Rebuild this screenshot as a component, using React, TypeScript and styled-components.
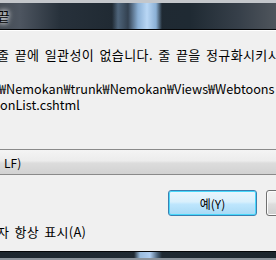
import styled, { createGlobalStyle } from 'styled-components'

const GlobalStyle = createGlobalStyle`
  html, body {
    margin: 0;
    padding: 0;
    width: 276px;
    height: 260px;
    overflow: hidden;
    background: #f0f0f0;
  }
`

const Frame = styled.div`
  width: 276px;
  height: 260px;
  overflow: hidden;

  display: flex;
  flex-direction: column;

  background: #f0f0f0;
  font-family: 'Noto Sans CJK KR', 'Noto Sans', sans-serif;
  font-size: 12px;
  color: #000;
`

const TitleBar = styled.div`
  height: 26px;
  flex-shrink: 0;

  display: flex;
  align-items: center;

  border-top: 3px solid #c4c7cb;
  border-bottom: 1px solid #050608;
  box-shadow: 0 1px 0 #ffffff;

  background:
    linear-gradient(
      90deg,
      transparent 0px,
      transparent 112px,
      rgba(110, 140, 170, 0.6) 118px,
      rgba(80, 100, 125, 0.4) 128px,
      rgba(150, 190, 230, 0.9) 138px,
      rgba(185, 215, 245, 1) 147px,
      rgba(150, 190, 230, 0.9) 156px,
      transparent 162px
    ),
    linear-gradient(
      90deg,
      #454c55 0px,
      #4d5560 20px,
      #27313b 60px,
      #1f2932 120px,
      #1f2a33 190px,
      #37404a 240px,
      #4f555c 276px
    );
`

const Title = styled.span`
  margin-left: -17px;
  padding-bottom: 2px;
  font-size: 13px;

  color: #000;
  text-shadow: 0 0 6px #fff, 0 0 4px #fff;
`

const Message = styled.div`
  display: flex;
  flex-direction: column;

  margin-top: 17px;
  line-height: 16px;
  white-space: nowrap;
`

const Line = styled.div<{ $shift: number; $gap?: number; $size?: number; $wide?: boolean }>`
  margin-left: ${(p) => p.$shift}px;
  margin-top: ${(p) => p.$gap ?? 0}px;
  font-size: ${(p) => p.$size ?? 12}px;
  letter-spacing: ${(p) => (p.$wide ? '0.4px' : 'normal')};
  word-spacing: ${(p) => (p.$wide ? '2px' : 'normal')};
`

const Combo = styled.div`
  height: 24px;
  margin: 36px -4px 0 -4px;

  display: flex;
  align-items: center;
  padding-left: 7px;

  border: 1px solid #8a8a8a;
  background: linear-gradient(#f4f4f4 0%, #ececec 45%, #dcdcdc 55%, #d2d2d2 100%);
`

const ButtonRow = styled.div`
  display: flex;
  gap: 9px;

  margin-top: 15px;
  padding-left: 168px;
`

const Button = styled.div<{ $primary?: boolean }>`
  width: 87px;
  height: 24px;
  flex-shrink: 0;

  display: flex;
  align-items: center;
  justify-content: center;

  border: 1px solid ${(p) => (p.$primary ? '#3c7fb1' : '#707070')};
  border-radius: 3px;
  box-shadow: inset 0 0 0 1px ${(p) => (p.$primary ? '#48d8fb' : '#fcfcfc')};
  background: ${(p) =>
    p.$primary
      ? 'linear-gradient(#eaf6fd 0%, #d9f0fc 45%, #bee6fd 55%, #a7d9f5 100%)'
      : 'linear-gradient(#f2f2f2 0%, #ebebeb 45%, #dddddd 55%, #cfcfcf 100%)'};
`

const CheckLabel = styled.div`
  margin-top: 8px;
  margin-left: -3px;
  line-height: 16px;
  font-size: 13px;
  letter-spacing: 0.3px;
  word-spacing: 2px;
  white-space: nowrap;
`

const BottomBar = styled.div`
  margin-top: auto;
  height: 6px;
  flex-shrink: 0;

  border-top: 1px solid #050608;
  border-bottom: 2px solid #8c939b;

  background:
    linear-gradient(
      90deg,
      transparent 134px,
      rgba(160, 195, 230, 0.95) 140px,
      rgba(175, 205, 240, 1) 150px,
      rgba(90, 120, 150, 0.6) 158px,
      transparent 162px
    ),
    linear-gradient(90deg, #1d262e 0px, #202a33 140px, #1c252d 276px);
`

const App = () => {
  return (
    <Frame>
      <GlobalStyle />
      <TitleBar>
        <Title>줄 끝</Title>
      </TitleBar>

      <Message>
        <Line $shift={-3} $size={13} $wide>
          줄 끝에 일관성이 없습니다. 줄 끝을 정규화시키시겠습니까?
        </Line>
        <Line $shift={-1} $gap={18} $size={12.7}>
          ₩Nemokan₩trunk₩Nemokan₩Views₩Webtoons ₩
        </Line>
        <Line $shift={0} $size={12.7}>
          onList.cshtml
        </Line>
      </Message>

      <Combo>LF)</Combo>

      <ButtonRow>
        <Button $primary>예(Y)</Button>
        <Button>아니요(N)</Button>
      </ButtonRow>

      <CheckLabel>자 항상 표시(A)</CheckLabel>

      <BottomBar />
    </Frame>
  )
}

export default App
